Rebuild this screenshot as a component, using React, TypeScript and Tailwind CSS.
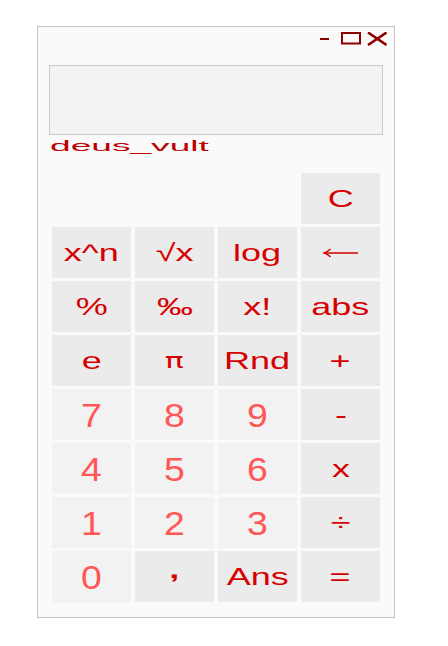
const keys: { label: string; digit?: boolean }[] = [
  { label: 'x^n' }, { label: '√x' }, { label: 'log' }, { label: '←' },
  { label: '%' }, { label: '‰' }, { label: 'x!' }, { label: 'abs' },
  { label: 'e' }, { label: 'π' }, { label: 'Rnd' }, { label: '+' },
  { label: '7', digit: true }, { label: '8', digit: true }, { label: '9', digit: true }, { label: '-' },
  { label: '4', digit: true }, { label: '5', digit: true }, { label: '6', digit: true }, { label: 'x' },
  { label: '1', digit: true }, { label: '2', digit: true }, { label: '3', digit: true }, { label: '÷' },
  { label: '0', digit: true }, { label: ',' }, { label: 'Ans' }, { label: '=' },
];

function Label({ label }: { label: string }) {
  if (label === '←') {
    return (
      <svg width="35" height="10" viewBox="0 0 35 10" fill="none" stroke="#d60000" strokeWidth="1.4">
        <path d="M1 5 H35" />
        <path d="M7.5 1 Q4 4.2 1 5 Q4 5.8 7.5 9" />
      </svg>
    );
  }
  if (label === 'π') {
    return (
      <span
        className="inline-block scale-x-150 text-[21px] leading-[28px]"
        style={{ fontFamily: '"DejaVu Sans", sans-serif' }}
      >
        π
      </span>
    );
  }
  if (label === ',') {
    return (
      <span className="inline-block -translate-y-[7px] scale-x-150 text-[24px] font-bold leading-[28px]">,</span>
    );
  }
  return <span className="inline-block scale-x-150 text-[24px] leading-[28px]">{label}</span>;
}

function Key({ label, digit }: { label: string; digit?: boolean }) {
  return (
    <button
      className={`flex items-center justify-center overflow-hidden ${digit ? 'bg-[#f2f2f2] text-[#ff5656]' : 'bg-[#ebebeb] text-[#d60000]'
        }`}
    >
      {digit ? (
        <span className="inline-block scale-x-110 text-[34px] leading-[40px]">{label}</span>
      ) : (
        <Label label={label} />
      )}
    </button>
  );
}

export default function App() {
  return (
    <div
      className="min-h-screen bg-white pl-[37px] pt-[26px]"
      style={{ fontFamily: '"Liberation Sans", Arial, sans-serif' }}
    >
      <div className="flex h-[592px] w-[358px] flex-col border border-[#c3c3c3] bg-[#fafafa]">
        {/* Title bar */}
        <div className="flex h-[38px] justify-end pr-[7px] pt-[5px]">
          <svg width="67" height="14" viewBox="0 0 67 14" fill="none">
            <rect x="0" y="6" width="9" height="2" fill="#8f0000" />
            <rect x="22" y="1" width="18" height="10.5" stroke="#8f0000" strokeWidth="2" />
            <path d="M48 0.5 L66.5 13 M66.5 0.5 L48 13" stroke="#8f0000" strokeWidth="2.6" />
          </svg>
        </div>

        {/* Display */}
        <div className="ml-[11px] h-[70px] w-[334px] border border-[#c8c8c8] bg-[#f2f2f2]" />

        <div className="ml-[12px] mt-[3px] h-[16px] text-[14px] leading-[16px] text-[#c00000]">
          <span className="inline-block origin-left scale-x-[2.65]">deus_vult</span>
        </div>

        {/* Keypad */}
        <div className="ml-[14px] mt-[19px] grid grid-cols-[repeat(4,79px)] auto-rows-[51px] gap-x-[4px] gap-y-[3px]">
          <div className="col-start-4">
            <div className="flex h-full items-center justify-center bg-[#ebebeb] text-[#d60000]">
              <span className="inline-block scale-x-150 text-[24px] leading-[28px]">C</span>
            </div>
          </div>
          {keys.map((k, i) => (
            <Key key={i} label={k.label} digit={k.digit} />
          ))}
        </div>
      </div>
    </div>
  );
}
